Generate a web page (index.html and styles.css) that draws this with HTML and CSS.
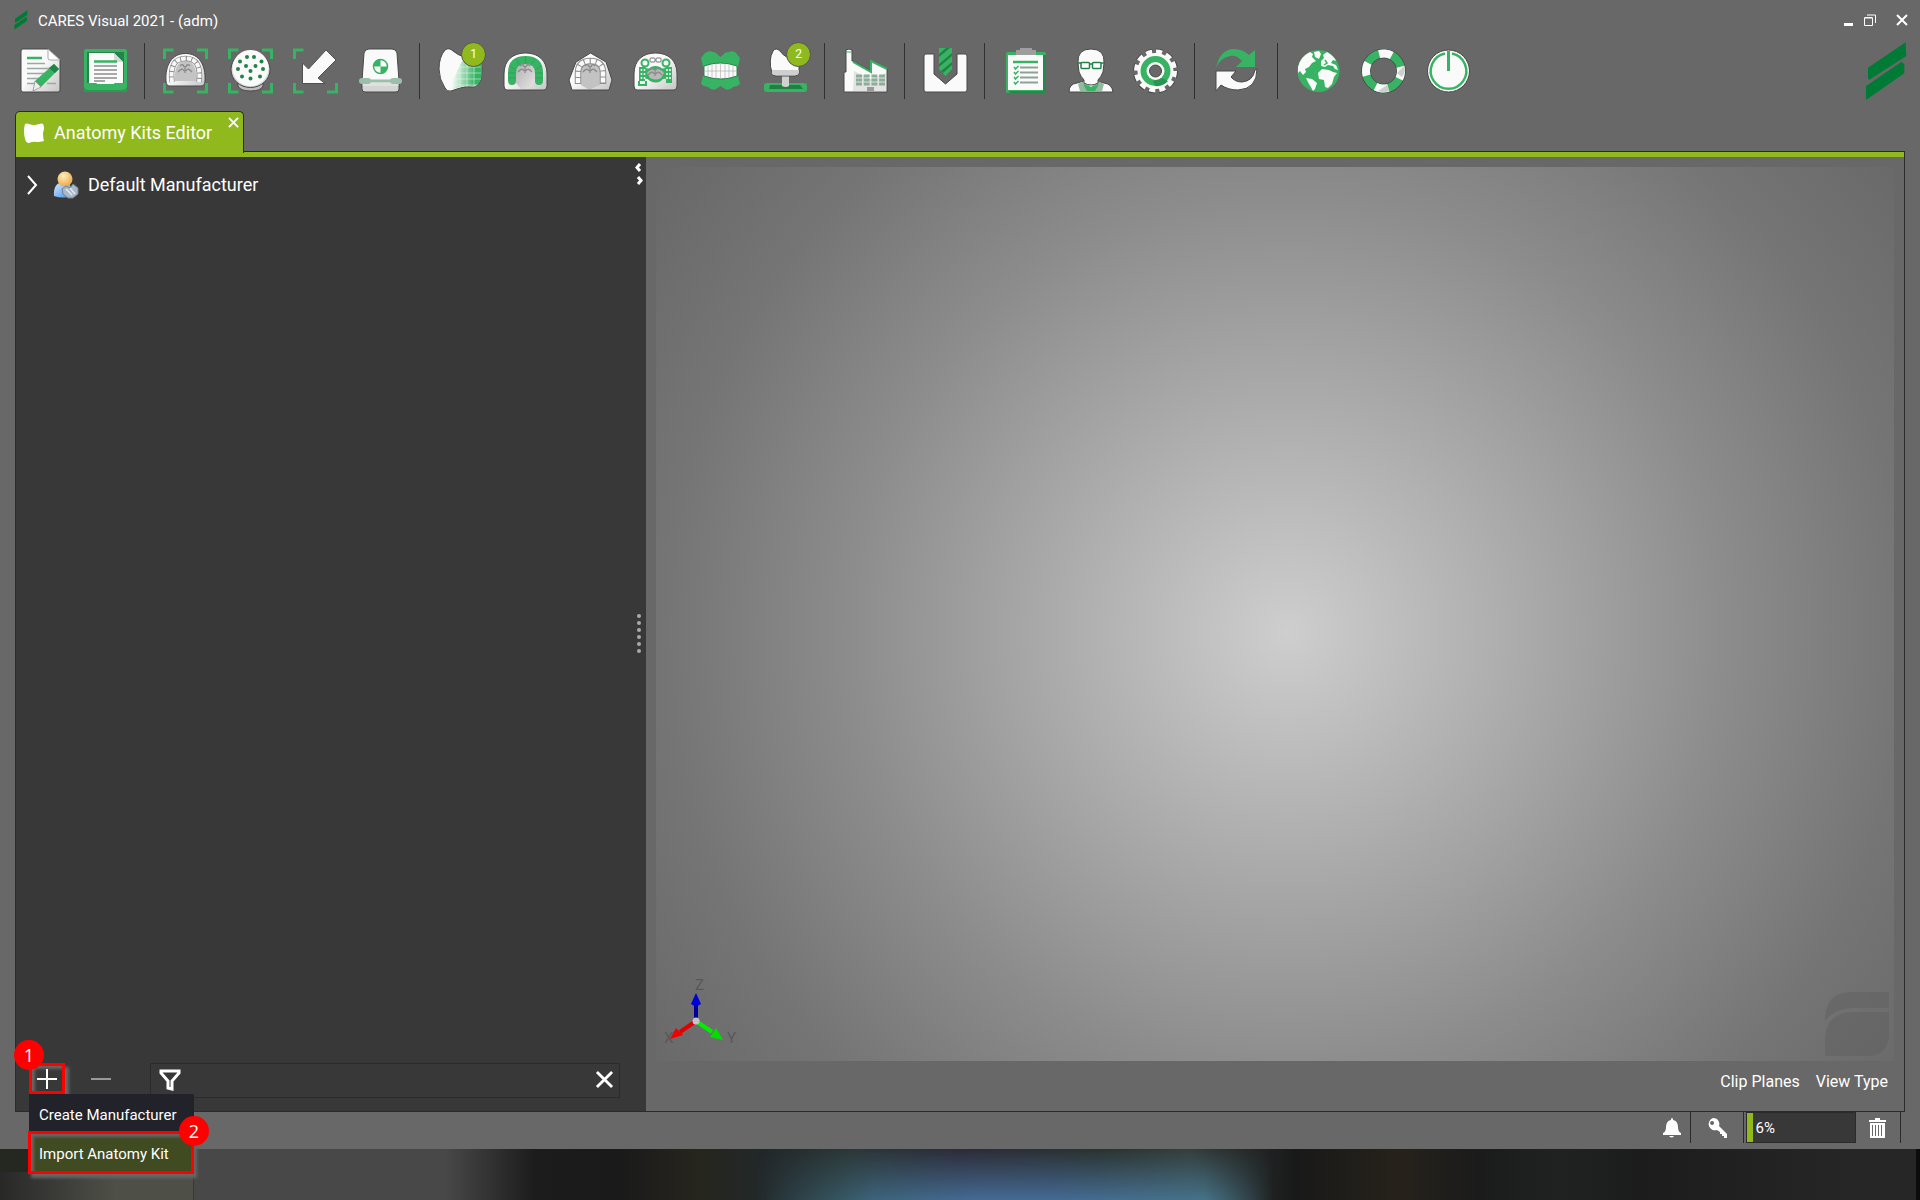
FILE: index.html
```html
<!DOCTYPE html>
<html lang="en">
<head>
<meta charset="utf-8">
<title>CARES Visual 2021</title>
<link rel="stylesheet" href="styles.css">
</head>
<body>
<svg class="defs" width="0" height="0" aria-hidden="true">
  <defs>
    <linearGradient id="shade" x1="0" y1="0" x2="1" y2="1">
      <stop offset="0.45" stop-color="#fafafa"/><stop offset="1" stop-color="#c4c4c4"/>
    </linearGradient>
    <linearGradient id="palate" x1="0" y1="0" x2="1" y2="1">
      <stop offset="0" stop-color="#b0b0b0"/><stop offset="1" stop-color="#e6e6e6"/>
    </linearGradient>
    <linearGradient id="mesh" x1="0" y1="0.4" x2="1" y2="0.5">
      <stop offset="0.1" stop-color="#37b363" stop-opacity="0"/><stop offset="0.8" stop-color="#37b363"/>
    </linearGradient>
    <linearGradient id="blue" x1="0" y1="0" x2="1" y2="1">
      <stop offset="0" stop-color="#d8ecff"/><stop offset="1" stop-color="#3d8be8"/>
    </linearGradient>
    <radialGradient id="skin" cx="0.4" cy="0.3" r="0.7">
      <stop offset="0" stop-color="#ffeebc"/><stop offset="1" stop-color="#eea94c"/>
    </radialGradient>
    <g id="rugae" fill="none" stroke="#8a8a8a" stroke-width="1.3">
      <path d="M24 19v7M19 19q3-3 4 1M29 19q-3-3-4 1M17 25q4-5 6-1M31 25q-4-5-6-1"/>
    </g>
    <g id="corners" fill="none" stroke="#37b363" stroke-width="3">
      <path d="M3.500 12V3h9M3.500 36v9h9M36 45h9.500v-9"/>
    </g>
  </defs>
</svg>

<div class="app">
  <header class="titlebar">
    <svg class="app-mark" viewBox="0 0 44 60" aria-hidden="true"><path d="M41 1v14L5 39l-1-2V26zM38 21l2 2v9L2 59V45z"/></svg>
    <h1 class="app-title">CARES Visual 2021 - (adm)</h1>
    <div class="window-buttons">
      <button type="button" aria-label="Minimize"><svg viewBox="0 0 12 12"><path class="solid" d="M0 9h9v3H0z"/></svg></button>
      <button type="button" aria-label="Restore"><svg viewBox="0 0 12 12"><path d="M.5 4h8v7.500h-8zM3 1h8.500v8M.5 3.500h8" /></svg></button>
      <button type="button" aria-label="Close"><svg viewBox="0 0 12 12"><path class="bold" d="M1 1l10 10M11 1L1 11"/></svg></button>
    </div>
  </header>

  <nav class="toolbar" aria-label="Main">
    <button type="button" aria-label="New order"><svg viewBox="0 0 48 48">
      <path d="M7 2h25l12 11v30q0 2-2 2H7q-2 0-2-2V4q0-2 2-2z" fill="url(#shade)" stroke="#484848"/>
      <path d="M32 2v9q0 2 2 2h10z" fill="#fff" stroke="#aaa"/>
      <path d="M11 11h15" stroke="#37b363" stroke-width="2.500"/>
      <path d="M11 16.500h18M11 21.500h25M11 26.500h18M11 31.500h13M11 36.500h9M31 36.500h9" stroke="#9aaaa0" stroke-width="1.500"/>
      <path d="M38 17l5 5-18 18-6-6z" fill="#37b363"/><path d="M38 17l5 5-4 4-6-5z" fill="#218346"/>
      <path d="M19 34l6 6-8 4z" fill="#eee" stroke="#777" stroke-width=".6"/></svg></button>
    <button type="button" aria-label="Orders"><svg viewBox="0 0 48 48">
      <rect x="3" y="2" width="43" height="43" rx="2" fill="#37b363"/><rect x="6" y="5" width="37" height="32" fill="#24844a"/>
      <path d="M8 6h25l9 9v22H8z" fill="#fafafa"/><path d="M33 6v9h9z" fill="#d8d8d8"/>
      <path d="M13 14.500h23" stroke="#37b363" stroke-width="2.500"/>
      <path d="M13 19h23M13 23h23M13 27h23M13 31h23M13 34h11" stroke="#8d8d8d" stroke-width="1.500"/>
      <path d="M3 36h12q1 0 1 1v3q0 1 1 1h15q1 0 1-1v-3q0-1 1-1h12v7q0 2-2 2H5q-2 0-2-2z" fill="#37b363"/><path d="M3 40v3q0 2 2 2h39q2 0 2-2v-3q-2 3-5 3H8q-4 0-5-3z" fill="#2a9b52"/></svg></button>
    <span class="sep"></span>
    <button type="button" aria-label="Scan arch"><svg viewBox="0 0 48 48">
      <use href="#corners"/><path d="M36 3h9.500v9" fill="none" stroke="#37b363" stroke-width="3"/>
      <path d="M5 34C4 18 11 6.500 24.500 6.500S45 18 44 34q0 5-4 5H9q-4 0-4-5z" fill="url(#shade)" stroke="#484848"/>
      <path d="M14 34C13 20 17 14 24.500 14S36 20 35 34z" fill="#c4c4c4"/>
      <path d="M11 35C9 18 14 11.500 24.500 11.500S40 18 38 35" fill="none" stroke="#8a8a8a" stroke-width="5.500"/>
      <path d="M11 35C9 18 14 11.500 24.500 11.500S40 18 38 35" fill="none" stroke="#f7f7f7" stroke-width="4" stroke-dasharray="4.500 1"/>
      <use href="#rugae"/></svg></button>
    <button type="button" aria-label="Scan dies"><svg viewBox="0 0 48 48">
      <use href="#corners"/><path d="M36 3h9.500v9" fill="none" stroke="#37b363" stroke-width="3"/>
      <path d="M12 34h25v5q-2 5-12.500 5T12 39z" fill="#bdbdbd" stroke="#484848"/>
      <ellipse cx="24.500" cy="22.500" rx="19.500" ry="18" fill="#d6d6d6" stroke="#484848"/><circle cx="24.500" cy="21" r="18" fill="#fafafa"/>
      <g fill="#218346"><circle cx="21" cy="10" r="2"/><circle cx="28" cy="10" r="2"/><circle cx="14" cy="14.500" r="2"/><circle cx="35.500" cy="14.500" r="2"/><circle cx="20" cy="19" r="2"/><circle cx="29.500" cy="19" r="2"/><circle cx="12" cy="22" r="2"/><circle cx="37" cy="22" r="2"/><circle cx="24.500" cy="24" r="2"/><circle cx="16" cy="29.500" r="2"/><circle cx="34" cy="29.500" r="2"/><circle cx="24.500" cy="31.500" r="2"/></g></svg></button>
    <button type="button" aria-label="Import scan"><svg viewBox="0 0 48 48">
      <use href="#corners"/><path d="M11.500 16l6 6L35 3l10 10-18 18 7 5.500H11.500z" fill="#fafafa" stroke="#505050"/></svg></button>
    <button type="button" aria-label="Scanner"><svg viewBox="0 0 48 48">
      <path d="M6 34h37v8q0 3-3 3H9q-3 0-3-3z" fill="#d4d4d4" stroke="#484848"/>
      <path d="M13 2h23q4 0 5 4l2 28v4H6v-4L8 6q1-4 5-4z" fill="#fafafa" stroke="#484848"/><path d="M6.500 36h36v3h-36z" fill="#e0e0e0"/>
      <path d="M10 34h28" stroke="#9bbfa9" stroke-width="3"/><rect x="3" y="31" width="12" height="6" rx="3" fill="#9bbfa9"/><rect x="34" y="31" width="12" height="6" rx="3" fill="#9bbfa9"/>
      <circle cx="24.500" cy="19.500" r="7" fill="#fff" stroke="#37b363" stroke-width="1.500"/><path d="M24.500 19.500v-7a7 7 0 0 0-7 7zM24.500 19.500v7a7 7 0 0 0 7-7z" fill="#37b363"/></svg></button>
    <span class="sep"></span>
    <button type="button" aria-label="Anatomy kits"><svg viewBox="0 0 48 48">
      <path d="M9 3q4-3 8 1 9 8 28 8 2 10 0 20-2 7-8 8-7-1-13 1l-9 3q-4 1-6-3-6-9-6-19 0-12 6-19z" fill="#fafafa" stroke="#484848"/>
      <path d="M26 14q9-1 19-1 2 9 0 19-2 6-8 7-7-1-13 1l-9 3q-2-2-1-6l5-8z" fill="url(#mesh)"/>
      <path d="M22 20h23M20 26h25M16 32h29M15 38h26M24 20v21M31 14v26M38 14v26" stroke="#e6fff0" stroke-opacity=".5"/></svg><span class="count">1</span></button>
    <button type="button" aria-label="Arch planning"><svg viewBox="0 0 48 48">
      <path d="M3 39V27C3 13 12 6 24.500 6S46 13 46 27v12q0 4-3 4H6q-3 0-3-4z" fill="url(#shade)" stroke="#484848"/>
      <path d="M15 36V24q1-8 9.500-8t9.500 8v12q-5 6-14 6z" fill="url(#palate)"/>
      <path d="M11 34V26Q11 13 24.500 13T38 26v8" fill="none" stroke="#37b363" stroke-width="8" stroke-linecap="round"/>
      <path d="M7 31h8M7 26h8M9 19l6 4M15 12l4 6M24.500 9v8M34 12l-4 6M40 19l-6 4M42 26h-8M42 31h-8" stroke="#249650" stroke-opacity=".5"/><use href="#rugae"/></svg></button>
    <button type="button" aria-label="Model"><svg viewBox="0 0 48 48">
      <path d="M24.500 6L40 15l6 18-3 10H6L3 33l7-18z" fill="url(#shade)" stroke="#484848"/>
      <path d="M15 38V24q1-9 9.500-9t9.500 9v14l-9 4h-3z" fill="#c3c3c3"/>
      <path d="M12 37V26q0-12 12.500-12T37 26v11" fill="none" stroke="#8f8f8f" stroke-width="6.500"/><path d="M12 36V26q0-12 12.500-12T37 26v10" fill="none" stroke="#fafafa" stroke-width="4.500" stroke-dasharray="5 1"/><use href="#rugae"/></svg></button>
    <button type="button" aria-label="Partial framework"><svg viewBox="0 0 48 48">
      <path d="M3 39V27C3 13 12 6 24.500 6S46 13 46 27v12q0 4-3 4H6q-3 0-3-4z" fill="url(#shade)" stroke="#484848"/>
      <path d="M8 20h6q3 3 6 0 4-2 9 0 3 3 6 0h6v16h-6v-4q-3-1-5 2-5 3-11 0-3-3-5-2v2H8z" fill="#37b363"/><path d="M16 26q3-4 8.500-4t8.500 4l-3 5q-5 3-11 0z" fill="#b8b8b8"/>
      <path d="M10.500 22v12M13.500 22v10M36 22v12M39 22v12" stroke="#fff" stroke-width="1.500" stroke-dasharray="2 2"/>
      <g fill="none" stroke="#37b363" stroke-width="2"><circle cx="14" cy="16" r="3.500"/><circle cx="35" cy="16" r="3.500"/><path d="M8 34v4h7v-4"/></g>
      <g fill="#fff" stroke="#777"><rect x="19" y="11" width="5" height="4" rx="1"/><rect x="25" y="11" width="5" height="4" rx="1"/></g><use href="#rugae" y="3"/></svg></button>
    <button type="button" aria-label="Articulator"><svg viewBox="0 0 48 48">
      <path d="M9 6q4-3 8-1 3 0 5 3l2.500 2L27 8q2-3 6-3 4-2 7 1l4 5-2 9H7L5 11zM7 29q17 5 35 0l2 8q-3 3-7 3-4 4-8 2l-4.500-3L20 42q-4 2-8-2-4 0-7-3z" fill="#37b363"/>
      <path d="M8 19q16-6 33 0v10q-16 6-33 0z" fill="#fafafa" stroke="#24864a"/>
      <path d="M8 24h33M12 18v12M16 17v14M20 16v16M24.500 16v16M29 16v16M33 17v14M37 18v12" stroke="#aaa" stroke-width=".6"/></svg></button>
    <button type="button" aria-label="Implant"><svg viewBox="0 0 48 48">
      <rect x="3" y="36" width="43" height="9" rx="3" fill="#37b363"/><path d="M9 38h30l3 4H8z" fill="#208044"/>
      <path d="M21 28h7v11q-3 2-7 0z" fill="#d2d2d2"/>
      <path d="M12 4q3-4 7 0 6 9 19 8v14q-1 3-4 3H15q-4 0-4-3-4-13 1-22z" fill="#fafafa" stroke="#484848"/><path d="M11 23h27v3q-1 2-4 2H15q-4 0-4-2z" fill="#cfcfcf"/></svg><span class="count">2</span></button>
    <span class="sep"></span>
    <button type="button" aria-label="Production"><svg viewBox="0 0 48 48">
      <path d="M3 45V25h2V3q3-2 6 0v11h1l18 10V14l16 8v23z" fill="#fafafa" stroke="#484848"/>
      <path d="M12 15l18 10V14l16 8" fill="none" stroke="#37b363" stroke-width="2"/><path d="M5 5h6" stroke="#37b363"/><path d="M13 24l17 8 15-6v18H12z" fill="#ccc" opacity=".5"/>
      <path d="M15 29h29M15 33h29M15 37h29" stroke="#8aae98" stroke-width="3" stroke-dasharray="6 1.700"/><path d="M26 40h7v4h-7z" fill="#999"/></svg></button>
    <span class="sep"></span>
    <button type="button" aria-label="Milling"><svg viewBox="0 0 48 48">
      <path d="M5 7h8v20l11.500 10L36 27V7h8q2 0 2 2v34q0 2-2 2H5q-2 0-2-2V9q0-2 2-2z" fill="#fafafa" stroke="#484848"/>
      <path d="M18 1h13v21l-6.500 7-6.500-7z" fill="#37b363"/><path d="M18 7l7-6h4L18 10zM18 17L31 6v3L18 20zM20 24l11-9v3l-9 8z" fill="#218346"/></svg></button>
    <span class="sep"></span>
    <button type="button" aria-label="Checklist"><svg viewBox="0 0 48 48">
      <rect x="5" y="5" width="40" height="41" rx="2" fill="#37b363"/><path d="M42 8h3v36q0 2-2 2H9l-2-2h35z" fill="#238a4b"/><rect x="7" y="8" width="35" height="35" fill="#fafafa"/>
      <path d="M19 1h12v2h4v5H15V3h4z" fill="#9e9e9e"/><path d="M12 15h25" stroke="#37b363" stroke-width="2.500"/>
      <path d="M19 20.500h18M19 25.500h18M19 30.500h18M19 35.500h18" stroke="#8fa196" stroke-width="2"/>
      <path d="M13 20l1.500 2 3-3M13 25l1.500 2 3-3M13 30l1.500 2 3-3M13 35l1.500 2 3-3" fill="none" stroke="#37b363" stroke-width="1.500"/></svg></button>
    <button type="button" aria-label="Users"><svg viewBox="0 0 48 48">
      <path d="M3 45q0-8 8-9l7-2h13l7 2q8 1 9 9z" fill="#fafafa" stroke="#484848"/><path d="M12 37l6-3 7 6 7-6 6 3-2 7H14z" fill="#93b9a1"/><path d="M17 37l8 3 8-3-4 7h-8z" fill="#37b363"/>
      <path d="M12 16Q11 2 25 2t13 14l-1 9q-2 5-5 8v3q-7 4-14 0v-3q-3-3-5-8z" fill="#fafafa" stroke="#484848"/>
      <path d="M11 16h5M34 16h4M24 17h2" stroke="#218346" stroke-width="1.500"/><g fill="#fff" stroke="#218346" stroke-width="1.500"><rect x="15" y="15.500" width="8.500" height="6" rx="1"/><rect x="26.500" y="15.500" width="8.500" height="6" rx="1"/></g></svg></button>
    <button type="button" aria-label="Settings"><svg viewBox="0 0 48 48">
      <circle cx="24.500" cy="24" r="19.500" fill="none" stroke="#484848" stroke-width="6" stroke-dasharray="6.500 3.710"/>
      <circle cx="24.500" cy="24" r="19" fill="none" stroke="#fafafa" stroke-width="5" stroke-dasharray="6 3.948"/>
      <circle cx="24.500" cy="24" r="18" fill="#fafafa"/><circle cx="24.500" cy="24" r="15" fill="#37b363"/><path d="M31 31l6 3q-5 6-13 5l-2-5z" fill="#279650"/><circle cx="24.500" cy="24" r="9" fill="#fafafa"/><circle cx="24.500" cy="24" r="6" fill="#686868" stroke="#484848"/></svg></button>
    <span class="sep"></span>
    <button type="button" class="wide" aria-label="Synchronize"><svg viewBox="0 0 48 48">
      <path d="M4 21Q8 2 22 2q9 0 15 6l6-5v17H24l6-6q-5-6-12-5Q8 11 4 21z" fill="#37b363"/>
      <path d="M4 24h20l-5 6q4 5 11 5 11-1 13-12l2-1q0 20-19 21-10 0-17-5l-5 6z" fill="#fafafa" stroke="#484848"/></svg></button>
    <span class="sep"></span>
    <button type="button" aria-label="Website"><svg viewBox="0 0 48 48">
      <circle cx="24.500" cy="24" r="21" fill="#37b363"/>
      <path d="M4 20Q6 10 16 5l3 2-1 3 4 4-4 2-3 4-4 2 1 3-3 3-3-4-2 2zM20 5l5-1 2 3-2 5-4-2zM27 14l3-3-1-3 4-3q7 4 9 9l-3-1-2 3 5 2 2 5-3-1-2-3-5-1-3 2-4-1zM24 26l4-4 7 1 4 2 4 1-3 4-2 7-4 4-3-1-1-7-5-1zM12 31l6 1 5 4-2 6-2 2q-2-4-4-7z" fill="#fafafa"/><path d="M31 13l2 3-3 2" fill="none" stroke="#37b363" stroke-width="1.500"/></svg></button>
    <button type="button" aria-label="Support"><svg viewBox="0 0 48 48">
      <circle cx="24.500" cy="24" r="17.500" fill="none" stroke="#484848" stroke-width="9.500"/><circle cx="24.500" cy="24" r="17.500" fill="none" stroke="#37b363" stroke-width="8"/>
      <circle cx="24.500" cy="24" r="17.500" fill="none" stroke="#fafafa" stroke-width="8" stroke-dasharray="13 14.489" stroke-dashoffset="6.500" transform="rotate(5 24.500 24)"/>
      <path d="M19 44l9-6 3 6q-6 2-12 0zM38 26l7-7q2 6-2 11z" fill="#bbb" opacity=".7"/></svg></button>
    <button type="button" aria-label="Exit"><svg viewBox="0 0 48 48">
      <circle cx="24.500" cy="24" r="21" fill="#fafafa" stroke="#484848"/><path d="M21 6.500a17.800 17.800 0 1 0 7 0" fill="none" stroke="#37b363" stroke-width="2.500"/><path d="M24.500 4v20" stroke="#37b363" stroke-width="3"/></svg></button>
    <svg class="brand" viewBox="0 0 44 60" aria-hidden="true"><path d="M41.700 1.300l.6 13.700L5 39l-1-2V26.700zM37.700 20.700l2.600 2.600v9L2 59V45z"/></svg>
  </nav>

  <div class="tabs">
    <div class="tab">
      <svg class="tab-icon" viewBox="0 0 20 20" aria-hidden="true"><path d="M1 1q2-1 4 0 5 2 10 0 3-1 4 0 2 3 0 9 0 5 1 8-4 1-6 1-5-1-9 1-3 0-4-4-2-8 0-15z"/></svg>
      <span>Anatomy Kits Editor</span>
      <button type="button" class="tab-close" aria-label="Close tab"><svg viewBox="0 0 12 12"><path d="M1 1l10 10M11 1L1 11"/></svg></button>
    </div>
  </div>

  <main class="workspace">
    <aside class="sidebar">
      <ul class="tree">
        <li><button type="button" class="tree-row">
          <svg class="chevron" viewBox="0 0 11 20" aria-hidden="true"><path d="M1 1l8 9-8 9"/></svg>
          <svg class="person" viewBox="0 0 26 28" aria-hidden="true"><path d="M1 25q-1-13 9-14 9 0 10 14-10 3-19 0z" fill="url(#blue)"/><circle cx="12" cy="8" r="7.500" fill="url(#skin)"/><path d="M9 18l4-3 4 2 3-4 5 4v6l-5 4h-5l-5-4z" fill="#a9b8c4" stroke="#708090"/><path d="M13 18l6 6M17 17l5 6" stroke="#e0e9ee" stroke-width="1.500"/></svg>
          <span>Default Manufacturer</span></button></li>
      </ul>
      <div class="sidebar-foot">
        <div class="add">
          <button type="button" class="icon-btn marked" aria-label="Add"><svg viewBox="0 0 20 20"><path d="M10 0v20M0 10h20"/></svg></button>
          <span class="step step-one">1</span>
          <ul class="menu">
            <li><button type="button">Create Manufacturer</button></li>
            <li class="active"><button type="button">Import Anatomy Kit</button><span class="step step-two">2</span></li>
          </ul>
        </div>
        <button type="button" class="icon-btn dim" aria-label="Remove"><svg viewBox="0 0 20 20"><path d="M0 10h20"/></svg></button>
        <div class="filter">
          <svg class="funnel" viewBox="0 0 20 20" aria-hidden="true"><path d="M1 1h18v2l-7 8v8l-4-1v-7L1 3z"/></svg>
          <input type="text" aria-label="Filter">
          <button type="button" class="clear" aria-label="Clear filter"><svg viewBox="0 0 18 18"><path d="M1 1l16 16M17 1L1 17"/></svg></button>
        </div>
      </div>
      <div class="collapse">
        <svg viewBox="0 0 8 22" aria-hidden="true"><path d="M5 1L2 4.500 5 8M3 14l3 3.500L3 21"/></svg>
      </div>
      <div class="grip"><i></i><i></i><i></i><i></i><i></i><i></i></div>
    </aside>

    <section class="view">
      <div class="canvas">
        <svg class="axes" viewBox="0 0 80 76">
          <text x="35" y="17">Z</text><text x="4" y="70">X</text><text x="67" y="70">Y</text>
          <path d="M36 48L20 59" stroke="#e00000" stroke-width="4"/><path d="M10 66l6-11 7 7z" fill="#f00000"/>
          <path d="M36 48l16 11" stroke="#00ef00" stroke-width="4"/><path d="M63 67l-13-3 6-9z" fill="#00df00"/>
          <path d="M36 48V30" stroke="#00009c" stroke-width="4"/><path d="M36 20l5 11q-5 4-10 0z" fill="#0000d8"/><circle cx="36" cy="48" r="3.500" fill="#c4c4c4"/></svg>
        <svg class="watermark" viewBox="0 0 64 64" aria-hidden="true"><path d="M64 0v16H28Q10 16 0 29 0 0 26 0zM64 20v20Q64 64 42 64H0V46Q2 20 28 20z"/></svg>
      </div>
      <div class="view-foot">
        <button type="button">Clip Planes</button>
        <button type="button">View Type</button>
      </div>
    </section>
  </main>

  <footer class="status">
    <button type="button" class="bell" aria-label="Notifications"><svg viewBox="0 0 20 20"><path d="M9 1q1-2 2 0v1q5 1 5 7 0 5 3 6v2H1v-2q3-1 3-6 0-6 5-7zM7 18h5q-2 3-5 0z"/></svg></button>
    <button type="button" class="key" aria-label="License"><svg viewBox="0 0 20 20"><path fill-rule="evenodd" d="M6 0a6 6 0 0 1 6 8l8 8v4h-3v-2h-2v-2h-2v-2l-3-2A6 6 0 1 1 6 0zM5 3a2 2 0 1 0 .1 0z"/></svg></button>
    <div class="meter" role="progressbar" aria-label="Disk usage" aria-valuenow="6" aria-valuemin="0" aria-valuemax="100"><span class="fill" style="width:6%"></span><span class="value">6%</span></div>
    <button type="button" class="bin" aria-label="Empty trash"><svg viewBox="0 0 20 20"><path fill-rule="evenodd" d="M1 2h6V0h5v2h6v2H1zM2 5h15v15H2zM4 7v11h1V7zM7 7v11h1V7zM10 7v11h1V7zM13 7v11h1V7z"/></svg></button>
  </footer>
  <div class="desktop"><span class="desktop-tile"></span><span class="desktop-glow"></span><span class="desktop-edge"></span></div>
</div>
</body>
</html>
```
FILE: styles.css
```css
* { box-sizing: border-box; }
:root {
  --grey: #686868;
  --dark: #383838;
  --line: #2b2b2b;
  --lime: #8fb91c;
}
body { margin: 0; background: var(--grey); color: #fff; font: 16px/20px Roboto, "Liberation Sans", sans-serif; }
button { display: flex; align-items: center; justify-content: center; margin: 0; padding: 0; border: 0; background: none; color: inherit; font: inherit; }
ul { margin: 0; padding: 0; list-style: none; }
svg { display: block; flex: none; overflow: visible; }
.defs { position: absolute; }
.app { display: flex; flex-direction: column; min-height: 100vh; overflow: hidden; }

.titlebar { display: flex; align-items: center; height: 40px; padding: 0 12px 0 13px; }
.app-mark { width: 16px; height: 20px; fill: #007b35; }
.app-title { flex: 1; margin: 0 0 0 9px; padding-top: 1px; font-size: 15px; font-weight: 400; }
.window-buttons { display: flex; }
.window-buttons button { margin-left: 8px; }
.window-buttons button:last-child { margin-left: 20px; }
.window-buttons svg { width: 12px; height: 12px; fill: none; stroke: #fff; }
.window-buttons .solid { fill: #fff; stroke: none; }
.window-buttons .bold { stroke-width: 2; }

.toolbar { display: flex; align-items: center; height: 62px; padding: 0 12px 0 7px; }
.toolbar button { position: relative; width: 65px; height: 56px; flex: none; }
.toolbar .wide { width: 68px; }
.toolbar button svg { width: 48px; height: 48px; margin-bottom: 1px; }
.sep { width: 1px; height: 56px; margin: 0 7px; background: #303030; box-sizing: content-box; }
.count { position: absolute; left: 34px; top: -1px; width: 25px; height: 25px; border: 1px solid #555; border-radius: 50%; background: var(--lime); font-size: 12px; line-height: 22px; text-align: center; }
.brand { width: 44px; height: 60px; margin-left: auto; fill: #007b35; }

.tabs { display: flex; height: 50px; padding: 9px 15px 0; align-items: stretch; }
.tab { position: relative; display: flex; align-items: center; width: 229px; margin-bottom: -1px; padding: 0 0 0 8px; border: 1px solid var(--line); border-bottom: 0; border-radius: 5px 5px 0 0; background: var(--lime); font-size: 18px; z-index: 1; }
.tab-icon { width: 20px; height: 20px; margin-right: 10px; fill: #fff; }
.tab-close { position: absolute; top: 5px; right: 4px; }
.tab-close svg { width: 11px; height: 11px; fill: none; stroke: #fff; stroke-width: 2; }

.workspace { display: flex; flex: 1; margin: -1px 15px 0; border: 1px solid var(--line); }
.sidebar, .view { border-top: 5px solid var(--lime); }
.sidebar { position: relative; display: flex; flex-direction: column; width: 630px; background: var(--dark); }
.tree { flex: 1; padding: 13px 11px; }
.tree-row { gap: 9px; height: 30px; font-size: 18px; }
.chevron { width: 11px; height: 20px; margin-right: 6px; fill: none; stroke: #fff; stroke-width: 2; }
.person { width: 26px; height: 28px; }
.sidebar-foot { display: flex; height: 36px; margin: 0 26px 12px 13px; }
.add { position: relative; }
.icon-btn { width: 36px; height: 31px; }
.icon-btn svg { width: 20px; height: 20px; fill: none; stroke: #fff; stroke-width: 2; }
.marked { border: 3px solid #f00; box-shadow: 4px 4px 3px #666, inset 3px 3px 3px #666; }
.dim { margin-left: 18px; }
.dim svg { stroke: #999; }
.filter { display: flex; align-items: center; flex: 1; height: 35px; margin-left: 31px; padding: 0 6px 2px 9px; border: 1px solid var(--line); }
.funnel { width: 20px; height: 20px; fill: none; stroke: #fff; stroke-width: 3; }
.filter input { flex: 1; min-width: 0; height: 30px; margin: 0 8px; border: 0; outline: 0; background: none; color: #fff; font: inherit; }
.clear svg { width: 17px; height: 17px; stroke: #fff; stroke-width: 3; }

.menu { position: absolute; left: 0; top: 31px; width: 165px; background: #22222a; z-index: 3; }
.menu li { position: relative; height: 38px; }
.menu button { width: 100%; height: 100%; padding: 3px 0 0 10px; justify-content: flex-start; white-space: nowrap; font-size: 15px; }
.menu .active { height: 43px; margin: -1px 0 0 -1px; border: 3px solid #f00; background: #414b22; box-shadow: 3px 4px 3px #666, inset 3px 3px 3px #666; }
.menu .active button { padding-left: 8px; }
.step { position: absolute; width: 30px; height: 30px; border-radius: 50%; background: #f00; font: 18px/30px "Open Sans", sans-serif; text-align: center; z-index: 4; }
.step-one { left: -15px; top: -23px; }
.step-two { right: -18px; top: -18px; }

.collapse { position: absolute; top: 6px; right: 3px; }
.collapse svg { width: 8px; height: 22px; fill: none; stroke: #fff; stroke-width: 3; }
.grip { position: absolute; top: 457px; right: 5px; display: grid; gap: 3px; }
.grip i { width: 4px; height: 4px; border-radius: 50%; background: #aaa; }

.view { display: flex; flex: 1; flex-direction: column; padding: 10px 10px 0; }
.canvas { display: flex; flex: 1; align-items: flex-end; justify-content: space-between; padding: 0 5px 5px 4px; background: radial-gradient(circle at 51% 52%, #cecece 0, #adadad 220px, #8c8c8c 440px, #757575 620px, #686868 780px); }
.axes { width: 80px; height: 76px; margin-bottom: 7px; fill: #585858; font-size: 15px; }
.watermark { width: 64px; height: 64px; fill: #5c5c5c; fill-opacity: .4; }
.view-foot { display: flex; justify-content: flex-end; gap: 16px; height: 50px; padding: 11px 6px 0 0; font-size: 16px; }
.view-foot button { height: 20px; }

.status { display: flex; align-items: center; justify-content: flex-end; height: 37px; padding: 0 19px 6px 0; }
.status svg { width: 20px; height: 20px; fill: #fff; }
.status button { height: 31px; border-right: 1px solid var(--line); }
.bell { width: 38px; }
.key { width: 53px; }
.bin { width: 45px; }
.meter { position: relative; display: flex; align-items: center; width: 110px; height: 31px; margin-left: 2px; border: 1px solid var(--line); background: var(--dark); font-size: 15px; }
.fill { height: 100%; background: var(--lime); }
.value { margin-left: 2px; }

.desktop { display: flex; height: 51px; background: linear-gradient(90deg, #484848 0, #484848 445px, #1c1c1c 535px, #1a1a1a 620px, #26251e 700px, #22282a 765px, #2c3838 850px, #2d2c38 960px, #2b3330 1100px, #363e3c 1190px, #191919 1295px, #26221b 1400px, #1b1b1b 1480px, #202222 1560px, #1c1c1c 1640px, #262626 1850px); }
.desktop-tile { width: 194px; border-right: 1px solid #383838; background: linear-gradient(#252821 0 23px, transparent 23px), linear-gradient(90deg, #282828, #4e5047 60%); }
.desktop-glow {
  flex: 1;
  background: linear-gradient(90deg, #3a6272 640px, #456a94 780px, #456a94 860px, #457288 1010px);
  mask-image: linear-gradient(90deg, transparent 560px, #000 680px, #000 1010px, transparent 1080px), linear-gradient(transparent, #000);
  mask-composite: intersect;
}
.desktop-edge { width: 4px; background: #0c0c0c; }
```
